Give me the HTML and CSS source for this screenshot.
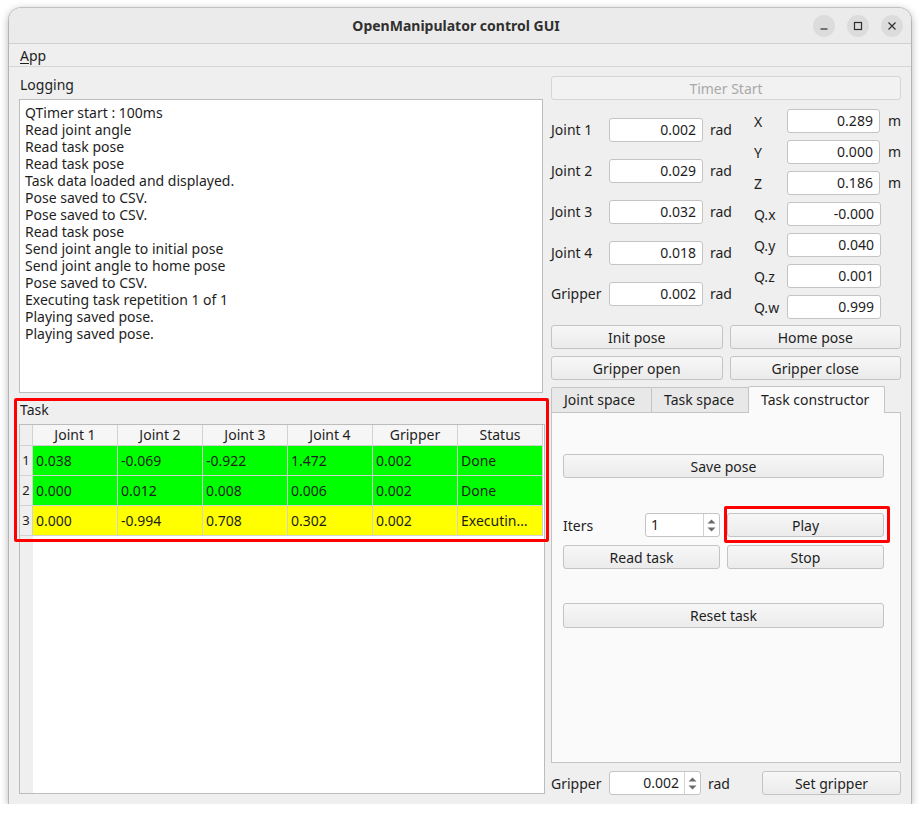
FILE: index.html
```html
<!DOCTYPE html>
<html>
<head>
<meta charset="utf-8">
<title>OpenManipulator control GUI</title>
<link rel="stylesheet" href="styles.css">
</head>
<body>
<div class="window">
  <header class="titlebar">
    <span></span>
    <span class="title">OpenManipulator control GUI</span>
    <div class="wm-buttons">
      <span class="wm-btn"><svg width="22" height="22" viewBox="0 0 22 22"><line x1="7.5" y1="14" x2="14.5" y2="14" stroke="#2e2e2e" stroke-width="1.2"/></svg></span>
      <span class="wm-btn"><svg width="22" height="22" viewBox="0 0 22 22"><rect x="7.5" y="7.5" width="7" height="7" fill="none" stroke="#2e2e2e" stroke-width="1.2"/></svg></span>
      <span class="wm-btn"><svg width="22" height="22" viewBox="0 0 22 22"><path d="M7.5 7.5 L14.5 14.5 M14.5 7.5 L7.5 14.5" stroke="#2e2e2e" stroke-width="1.2"/></svg></span>
    </div>
  </header>
  <nav class="menubar"><span class="menu"><u>A</u>pp</span></nav>
  <main class="content">
    <section class="left">
      <div class="group-label">Logging</div>
      <div class="log">
        <div>QTimer start : 100ms</div>
        <div>Read joint angle</div>
        <div>Read task pose</div>
        <div>Read task pose</div>
        <div>Task data loaded and displayed.</div>
        <div>Pose saved to CSV.</div>
        <div>Pose saved to CSV.</div>
        <div>Read task pose</div>
        <div>Send joint angle to initial pose</div>
        <div>Send joint angle to home pose</div>
        <div>Pose saved to CSV.</div>
        <div>Executing task repetition 1 of 1</div>
        <div>Playing saved pose.</div>
        <div>Playing saved pose.</div>
      </div>
      <div class="task-label">Task</div>
      <div class="table">
        <div class="trow thead">
          <div class="corner"></div>
          <div class="th">Joint 1</div>
          <div class="th">Joint 2</div>
          <div class="th">Joint 3</div>
          <div class="th">Joint 4</div>
          <div class="th">Gripper</div>
          <div class="th">Status</div>
        </div>
        <div class="trow done">
          <div class="vh">1</div>
          <div class="td">0.038</div><div class="td">-0.069</div><div class="td">-0.922</div><div class="td">1.472</div><div class="td">0.002</div><div class="td">Done</div>
        </div>
        <div class="trow done">
          <div class="vh">2</div>
          <div class="td">0.000</div><div class="td">0.012</div><div class="td">0.008</div><div class="td">0.006</div><div class="td">0.002</div><div class="td">Done</div>
        </div>
        <div class="trow running">
          <div class="vh">3</div>
          <div class="td">0.000</div><div class="td">-0.994</div><div class="td">0.708</div><div class="td">0.302</div><div class="td">0.002</div><div class="td">Executin…</div>
        </div>
      </div>
    </section>

    <section class="right">
      <button class="btn btn-disabled timer">Timer Start</button>
      <div class="poses">
        <div class="jcol">
          <div class="jrow"><span class="jlabel">Joint 1</span><span class="field jfield">0.002</span><span class="unit">rad</span></div>
          <div class="jrow"><span class="jlabel">Joint 2</span><span class="field jfield">0.029</span><span class="unit">rad</span></div>
          <div class="jrow"><span class="jlabel">Joint 3</span><span class="field jfield">0.032</span><span class="unit">rad</span></div>
          <div class="jrow"><span class="jlabel">Joint 4</span><span class="field jfield">0.018</span><span class="unit">rad</span></div>
          <div class="jrow"><span class="jlabel">Gripper</span><span class="field jfield">0.002</span><span class="unit">rad</span></div>
        </div>
        <div class="ccol">
          <div class="crow"><span class="clabel">X</span><span class="field cfield">0.289</span><span class="cunit">m</span></div>
          <div class="crow"><span class="clabel">Y</span><span class="field cfield">0.000</span><span class="cunit">m</span></div>
          <div class="crow"><span class="clabel">Z</span><span class="field cfield">0.186</span><span class="cunit">m</span></div>
          <div class="crow"><span class="clabel">Q.x</span><span class="field cfield">-0.000</span></div>
          <div class="crow"><span class="clabel">Q.y</span><span class="field cfield">0.040</span></div>
          <div class="crow"><span class="clabel">Q.z</span><span class="field cfield">0.001</span></div>
          <div class="crow"><span class="clabel">Q.w</span><span class="field cfield">0.999</span></div>
        </div>
      </div>
      <div class="pose-buttons">
        <button class="btn">Init pose</button>
        <button class="btn">Home pose</button>
        <button class="btn">Gripper open</button>
        <button class="btn">Gripper close</button>
      </div>
      <div class="tabs">
        <div class="tab tab-joint">Joint space</div>
        <div class="tab tab-task">Task space</div>
        <div class="tab tab-active">Task constructor</div>
      </div>
      <div class="pane">
        <button class="btn save">Save pose</button>
        <div class="pane-grid">
          <div class="iters">
            <span>Iters</span>
            <div class="spin spin-iters">
              <span class="spin-value left">1</span>
              <span class="spin-arrows">
                <svg width="9" height="5" viewBox="0 0 9 5"><path d="M0.5 4.5 L4.5 0.5 L8.5 4.5 Z" fill="#6b6b6b"/></svg>
                <svg width="9" height="5" viewBox="0 0 9 5"><path d="M0.5 0.5 L4.5 4.5 L8.5 0.5 Z" fill="#6b6b6b"/></svg>
              </span>
            </div>
          </div>
          <button class="btn">Play</button>
          <button class="btn">Read task</button>
          <button class="btn">Stop</button>
        </div>
        <button class="btn reset">Reset task</button>
      </div>
      <div class="bottom-row">
        <span class="jlabel">Gripper</span>
        <div class="spin spin-grip">
          <span class="spin-value">0.002</span>
          <span class="spin-arrows">
            <svg width="9" height="5" viewBox="0 0 9 5"><path d="M0.5 4.5 L4.5 0.5 L8.5 4.5 Z" fill="#6b6b6b"/></svg>
            <svg width="9" height="5" viewBox="0 0 9 5"><path d="M0.5 0.5 L4.5 4.5 L8.5 0.5 Z" fill="#6b6b6b"/></svg>
          </span>
        </div>
        <span class="unit">rad</span>
        <button class="btn set-grip">Set gripper</button>
      </div>
    </section>
  </main>
  <div class="highlight hl-task"></div>
  <div class="highlight hl-play"></div>
</div>
</body>
</html>
```

FILE: styles.css
```css
* { box-sizing: border-box; }

body {
  margin: 0;
  background: #ffffff;
  font-family: "Noto Sans", "DejaVu Sans", sans-serif;
  font-size: 14px;
  color: #1e1e1e;
}

.window {
  position: relative;
  margin: 8px 0 0 9px;
  width: 902px;
  height: 796px;
  background: #efefef;
  border-radius: 12px 12px 0 0;
  box-shadow: 0 0 0 1px rgba(0, 0, 0, 0.16), 0 2px 9px rgba(0, 0, 0, 0.35);
  display: flex;
  flex-direction: column;
}

/* title bar */
.titlebar {
  flex: none;
  height: 36px;
  display: grid;
  grid-template-columns: 1fr auto 1fr;
  align-items: center;
  padding-right: 8px;
  background: #ebebeb;
  border-bottom: 1px solid #d0d0d0;
  border-radius: 12px 12px 0 0;
}
.title {
  font-weight: 700;
  font-size: 14px;
  color: #303030;
}
.wm-buttons {
  justify-self: end;
  display: flex;
  gap: 12px;
}
.wm-btn {
  width: 22px;
  height: 22px;
  border-radius: 50%;
  background: #dcdcdc;
  display: flex;
}

/* menu */
.menubar {
  flex: none;
  height: 23px;
  display: flex;
  align-items: center;
  padding-left: 11px;
  border-bottom: 1px solid #d6d6d6;
}
.menu u { text-decoration-thickness: 1px; text-underline-offset: 2px; }

/* content */
.content {
  flex: 1;
  display: flex;
  gap: 6px;
  padding: 9px 10px 9px 10px;
  min-height: 0;
}
.left {
  width: 526px;
  display: flex;
  flex-direction: column;
}
.right {
  width: 350px;
  display: flex;
  flex-direction: column;
}

.group-label {
  height: 23px;
  line-height: 18px;
  padding-left: 1px;
}
.log {
  height: 294px;
  width: 524px;
  background: #ffffff;
  border: 1px solid #bdbdbd;
  padding: 4px 5px;
  line-height: 17px;
}
.task-label {
  height: 31px;
  padding-top: 8px;
  line-height: 18px;
  padding-left: 1px;
}

/* table */
.table {
  flex: 1;
  margin-bottom: 1px;
  border: 1px solid #bcbcbc;
  background: linear-gradient(to right, #efefef 13px, #ffffff 13px);
}
.trow {
  display: grid;
  grid-template-columns: 13px repeat(6, 85px);
}
.thead > div {
  height: 21px;
  line-height: 20px;
  text-align: center;
  background: #f6f6f6;
  border-right: 1px solid #d2d2d2;
  border-bottom: 1px solid #d2d2d2;
}
.thead .corner { background: #efefef; }
.vh {
  height: 30px;
  line-height: 29px;
  text-align: center;
  background: #efefef;
  border-right: 1px solid #d2d2d2;
  border-bottom: 1px solid #d2d2d2;
  font-size: 13px;
}
.td {
  height: 30px;
  line-height: 29px;
  padding-left: 3px;
  border-right: 1px solid #d2d2d2;
  border-bottom: 1px solid #d2d2d2;
  white-space: nowrap;
  overflow: hidden;
}
.done .td { background: #00ff00; }
.running .td { background: #ffff00; }

/* widgets */
.btn {
  height: 24px;
  padding: 0;
  font-family: inherit;
  font-size: 14px;
  color: #1e1e1e;
  border: 1px solid #c4c4c4;
  border-radius: 3px;
  background: linear-gradient(#f7f7f7, #ebebeb);
  display: flex;
  align-items: center;
  justify-content: center;
}
.btn-disabled {
  color: #a9a9a9;
  background: #f2f2f2;
  border-color: #d5d5d5;
}
.field {
  height: 24px;
  line-height: 22px;
  background: #ffffff;
  border: 1px solid #c4c4c4;
  border-radius: 3px;
  text-align: right;
  padding-right: 6px;
}

.timer { flex: none; }

.poses {
  flex: none;
  height: 217px;
  margin-top: 5px;
  display: grid;
  grid-template-columns: 1fr 147px;
}
.jcol { padding-top: 4px; }
.jrow {
  height: 41px;
  display: flex;
  align-items: center;
}
.jlabel { width: 58px; flex: none; }
.jfield { width: 94px; }
.unit { margin-left: 7px; }

.crow {
  height: 31px;
  display: flex;
  align-items: center;
}
.clabel { width: 33px; flex: none; padding-top: 2px; }
.cfield { width: 94px; }
.cunit { margin-left: 8px; }

.pose-buttons {
  flex: none;
  margin-top: 3px;
  display: grid;
  grid-template-columns: 1fr 1fr;
  grid-auto-rows: 24px;
  gap: 7px;
}

/* tabs */
.tabs {
  flex: none;
  margin-top: 7px;
  height: 25px;
  display: flex;
  align-items: flex-end;
}
.tab {
  height: 25px;
  line-height: 24px;
  padding-left: 12px;
  background: #e8e8e8;
  border: 1px solid #c4c4c4;
  border-bottom: none;
  border-radius: 2px 2px 0 0;
}
.tab-joint { width: 101px; }
.tab-task { width: 98px; margin-left: -1px; }
.tab-active {
  position: relative;
  z-index: 1;
  width: 137px;
  height: 27px;
  margin-left: -1px;
  margin-bottom: -1px;
  line-height: 26px;
  padding-bottom: 2px;
  background: #fafafa;
}

.pane {
  flex: 1;
  background: #fafafa;
  border: 1px solid #c4c4c4;
  padding: 41px 16px 0 11px;
  display: flex;
  flex-direction: column;
}
.pane-grid {
  margin-top: 35px;
  display: grid;
  grid-template-columns: 157px 157px;
  grid-auto-rows: 24px;
  column-gap: 7px;
  row-gap: 8px;
}
.iters {
  display: flex;
  align-items: center;
  justify-content: space-between;
}
.reset { margin-top: 34px; height: 25px; }

/* spin boxes */
.spin {
  height: 24px;
  display: flex;
  background: #ffffff;
  border: 1px solid #c4c4c4;
  border-radius: 3px;
}
.spin-iters { width: 75px; }
.spin-grip { width: 92px; }
.spin-value {
  flex: 1;
  line-height: 22px;
  text-align: right;
  padding-right: 5px;
}
.spin-value.left { text-align: left; padding-left: 5px; }
.spin-arrows {
  width: 16px;
  border-left: 1px solid #d2d2d2;
  display: flex;
  flex-direction: column;
  align-items: center;
  justify-content: center;
  gap: 3px;
}
.spin-arrows svg { display: block; }

.bottom-row {
  flex: none;
  margin-top: 8px;
  height: 24px;
  display: flex;
  align-items: center;
}
.set-grip { margin-left: auto; width: 139px; }

/* annotation overlays */
.highlight {
  position: absolute;
  border: 3px solid #ff0000;
  border-radius: 2px;
  pointer-events: none;
}
.hl-task { left: 5px; top: 390px; width: 535px; height: 144px; }
.hl-play { left: 715px; top: 498px; width: 166px; height: 37px; }
```
